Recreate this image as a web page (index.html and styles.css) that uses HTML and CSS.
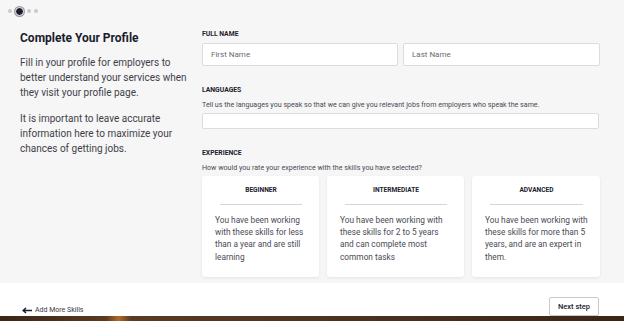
FILE: index.html
```html
<!DOCTYPE html>
<html lang="en">
<head>
    <meta charset="UTF-8">
    <meta name="viewport" content="width=device-width, initial-scale=1.0">
    <title>Complete Your Profile</title>
    <link rel="stylesheet" href="styles.css">
</head>
<body>
    <div class="page">
        <div class="main">
            <div class="steps">
                <span class="dot"></span>
                <span class="dot active"></span>
                <span class="dot"></span>
                <span class="dot"></span>
            </div>

            <div class="content">
                <div class="intro">
                    <h1>Complete Your Profile</h1>
                    <p>Fill in your profile for employers to better understand your services when they visit your profile page.</p>
                    <p>It is important to leave accurate information here to maximize your chances of getting jobs.</p>
                </div>

                <div class="form">
                    <div class="field">
                        <label>Full Name</label>
                        <div class="name-row">
                            <input type="text" placeholder="First Name">
                            <input type="text" placeholder="Last Name">
                        </div>
                    </div>

                    <div class="field">
                        <label>Languages</label>
                        <div class="hint">Tell us the languages you speak so that we can give you relevant jobs from employers who speak the same.</div>
                        <input type="text" class="lang-input">
                    </div>

                    <div class="field">
                        <label>Experience</label>
                        <div class="hint">How would you rate your experience with the skills you have selected?</div>
                        <div class="levels">
                            <div class="level">
                                <h3>Beginner</h3>
                                <p>You have been working with these skills for less than a year and are still learning</p>
                            </div>
                            <div class="level">
                                <h3>Intermediate</h3>
                                <p>You have been working with these skills for 2 to 5 years and can complete most common tasks</p>
                            </div>
                            <div class="level">
                                <h3>Advanced</h3>
                                <p>You have been working with these skills for more than 5 years, and are an expert in them.</p>
                            </div>
                        </div>
                    </div>
                </div>
            </div>
        </div>

        <div class="footer">
            <a class="back-link" href="#">
                <svg width="10" height="7" viewBox="0 0 10 7"><path d="M10 3.5H2M4 1L1.2 3.5 4 6" fill="none" stroke="#1b1c2c" stroke-width="1.5"/></svg>
                Add More Skills
            </a>
            <button class="next-btn">Next step</button>
        </div>
        <div class="bottom-bar"></div>
    </div>
</body>
</html>
```

FILE: styles.css
```css
* {
    box-sizing: border-box;
    margin: 0;
    padding: 0;
}

body {
    font-family: 'Roboto', sans-serif;
    color: #1f2030;
    background-color: #fff;
}

.page {
    width: 624px;
    height: 321px;
    display: flex;
    flex-direction: column;
    overflow: hidden;
}

.main {
    background-color: #f6f6f6;
    height: 283px;
    padding-top: 7px;
}

/* step indicator */
.steps {
    display: flex;
    align-items: center;
    gap: 3px;
    padding-left: 8px;
    height: 8px;
}

.dot {
    width: 4px;
    height: 4px;
    border-radius: 50%;
    background-color: #c9c9cc;
}

.dot.active {
    width: 9px;
    height: 9px;
    background-color: #1d1d2f;
    border: 1.5px solid #f6f6f6;
    box-shadow: 0 0 0 1px #9a9aa3;
}

.content {
    display: grid;
    grid-template-columns: 182px 398px;
    padding-left: 20px;
    margin-top: 15px;
}

.intro {
    width: 176px;
}

.intro h1 {
    font-size: 12px;
    font-weight: 700;
    line-height: 16px;
    color: #1b1c2c;
    margin-bottom: 9px;
}

.intro p {
    font-size: 10px;
    line-height: 15px;
    color: #3e3f49;
    margin-bottom: 11px;
}

.field {
    margin-bottom: 20px;
}

.field label {
    display: block;
    font-size: 6.8px;
    font-weight: 700;
    text-transform: uppercase;
    color: #1b1c2c;
    line-height: 9px;
}

.hint {
    font-size: 7.1px;
    color: #4a4b55;
    line-height: 10px;
    margin-top: 5px;
}

input {
    font-family: inherit;
    background-color: #fff;
    border: 1px solid #dcdcdc;
    border-radius: 2px;
    outline: none;
}

input::placeholder {
    color: #6a6b75;
}

.name-row {
    display: grid;
    grid-template-columns: 196px 197px;
    gap: 5px;
    margin-top: 4px;
}

.name-row input {
    height: 23px;
    font-size: 8px;
    padding: 0 8px;
}

.lang-input {
    display: block;
    width: 397px;
    height: 16px;
    margin-top: 3px;
}

.levels {
    display: grid;
    grid-template-columns: 117px 137px 128px;
    gap: 8px;
    margin-top: 3px;
}

.level {
    background-color: #fff;
    border-radius: 3px;
    box-shadow: 0 1px 3px rgba(0, 0, 0, 0.08);
    height: 101px;
    padding: 10px 12px 0 13px;
}

.level h3 {
    font-size: 6.6px;
    font-weight: 700;
    text-transform: uppercase;
    text-align: center;
    color: #1b1c2c;
    line-height: 8px;
    padding-bottom: 10px;
    margin: 0 5px 9px;
    border-bottom: 1px solid #d6d6d6;
}

.level p {
    font-size: 8.3px;
    line-height: 12.2px;
    color: #4a4b55;
}

/* footer */
.footer {
    flex: 1;
    display: flex;
    justify-content: space-between;
    align-items: flex-end;
    padding: 0 25px 0 22px;
}

.back-link {
    display: flex;
    align-items: center;
    gap: 3px;
    font-size: 7px;
    color: #3a3b45;
    text-decoration: none;
    margin-bottom: 2px;
}

.next-btn {
    font-family: inherit;
    font-size: 7.5px;
    font-weight: 500;
    color: #1b1c2c;
    background-color: #fff;
    border: 1px solid #c9c9c9;
    border-radius: 2px;
    width: 50px;
    height: 19px;
}

.bottom-bar {
    height: 5px;
    background: linear-gradient(90deg, #3b2618 0%, #5a3a22 17%, #b06a2a 19%, #5a3a22 21%, #4a3020 60%, #3a2517 100%);
}
```
